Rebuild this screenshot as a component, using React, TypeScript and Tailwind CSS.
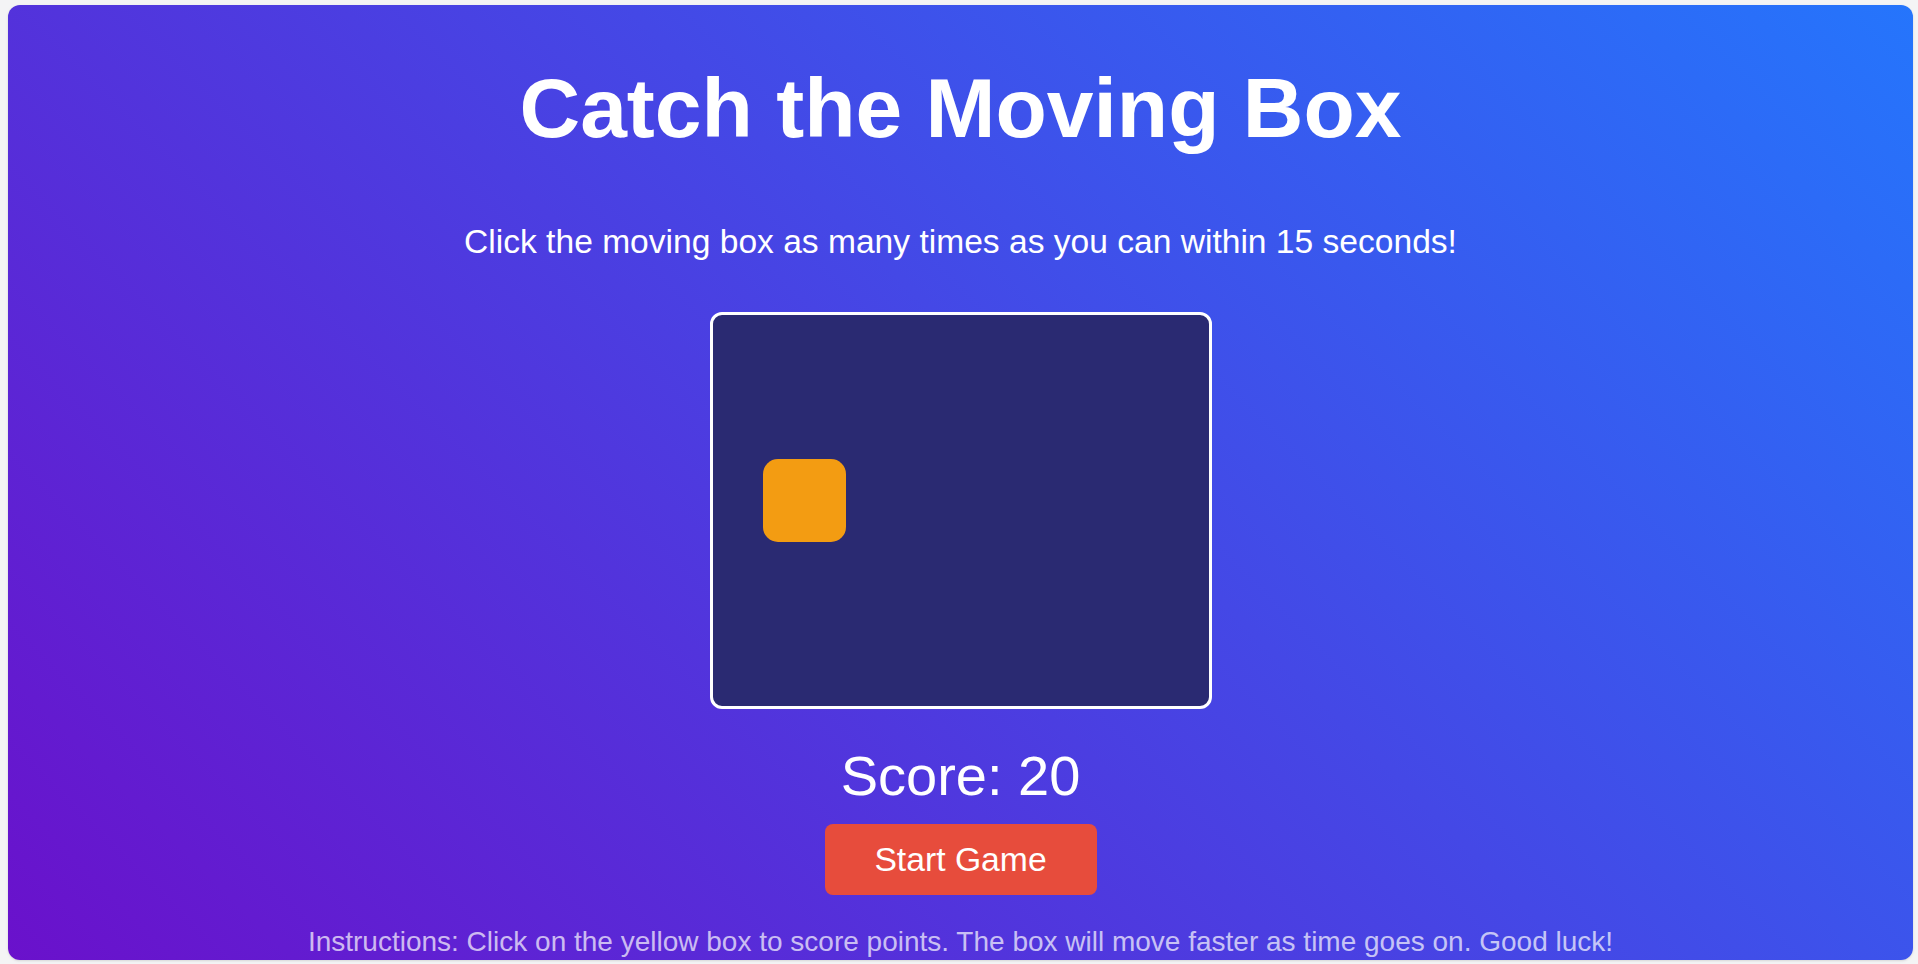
export default function App() {
  return (
    <div className="min-h-screen bg-[#f4f4f5] pt-[5px] pl-[8px] font-['Liberation_Sans',Arial,sans-serif]">
      <div className="w-[1905px] h-[955px] rounded-xl overflow-hidden shadow-sm bg-[linear-gradient(45deg,#6a11cb,#2575fc)] flex flex-col items-center text-white">
        <h1 className="mt-[61px] text-[84px] leading-[84px] font-bold">Catch the Moving Box</h1>
        <p className="mt-[75px] text-[33.6px] leading-[33px]">
          Click the moving box as many times as you can within 15 seconds!
        </p>

        <div className="relative mt-[54px] w-[502px] h-[397px] border-[3px] border-white rounded-xl bg-[#2a2a72]">
          <div className="absolute left-[50px] top-[144px] w-[83px] h-[83px] rounded-[15px] bg-[#f39c12]" />
        </div>

        <div className="mt-[39px] text-[56px] leading-[55px]">Score: 20</div>

        <button className="mt-[21px] w-[272px] h-[71px] rounded-lg bg-[#e74c3c] text-[33.7px] text-white">
          Start Game
        </button>

        <p className="mt-[33px] text-[28px] leading-[28px] text-white/70 whitespace-nowrap">
          Instructions: Click on the yellow box to score points. The box will move faster as time goes on. Good luck!
        </p>
      </div>
    </div>
  );
}
